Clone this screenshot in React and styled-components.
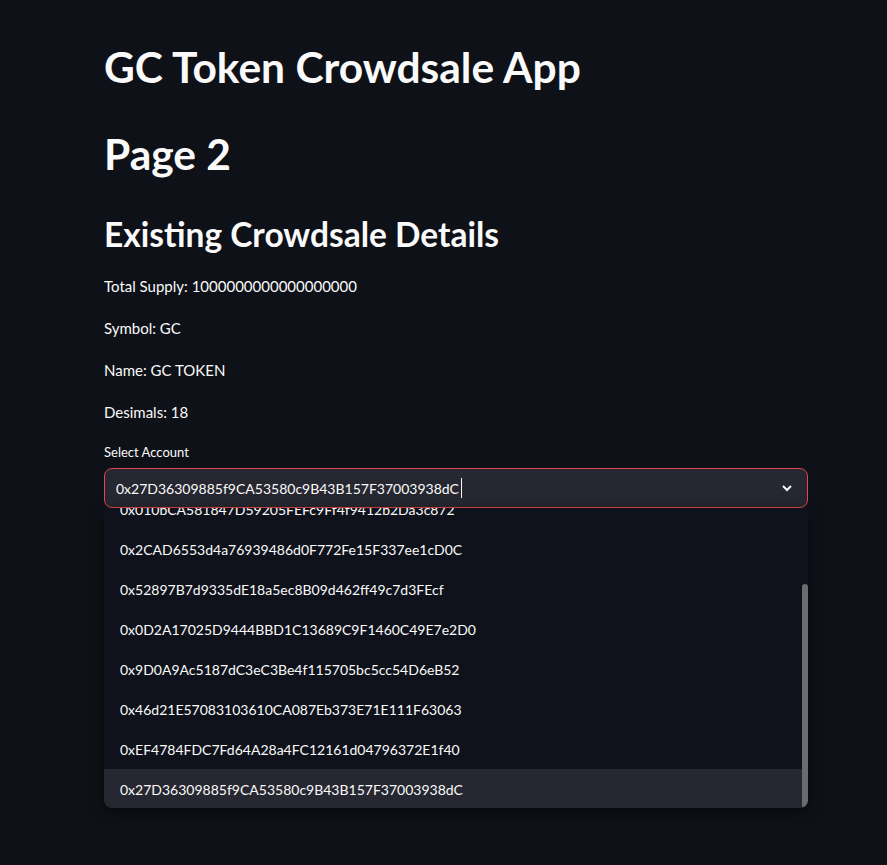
import React from 'react';
import styled, { createGlobalStyle } from 'styled-components';

const GlobalStyle = createGlobalStyle`
  html, body {
    margin: 0;
    padding: 0;
    background-color: #0e1117;
    color: #fafafa;
    font-family: Lato, "Noto Sans", sans-serif;
  }
`;

const Main = styled.main`
  width: 704px;
  padding: 41px 0 0 104px;
  min-height: 824px;
`;

const Title = styled.h1`
  margin: 0;
  font-size: 42.5px;
  line-height: 52px;
  font-weight: 700;
`;

const PageTitle = styled(Title)`
  margin-top: 35px;
`;

const Subheader = styled.h3`
  margin: 34px 0 0;
  font-size: 33.5px;
  line-height: 40px;
  font-weight: 700;
`;

const Details = styled.div`
  margin-top: 20px;
  display: flex;
  flex-direction: column;
  gap: 18px;
`;

const Line = styled.p`
  margin: 0;
  font-size: 15px;
  line-height: 24px;
`;

const Label = styled.label`
  display: block;
  margin-top: 18px;
  font-size: 13px;
  line-height: 20px;
`;

const SelectWrap = styled.div`
  position: relative;
  margin-top: 6px;
`;

const SelectBox = styled.div`
  box-sizing: border-box;
  height: 40px;
  display: flex;
  align-items: center;
  justify-content: space-between;
  padding: 0 14px 0 11px;
  background-color: #262730;
  border: 1px solid #e0474c;
  border-radius: 8px;
  font-size: 14px;
`;

const Value = styled.span`
  display: flex;
  align-items: center;
`;

const Caret = styled.span`
  width: 1px;
  height: 20px;
  margin-left: 2px;
  background-color: #fafafa;
`;

const Menu = styled.div`
  position: absolute;
  top: 100%;
  left: 0;
  right: 0;
  height: 300px;
  overflow: hidden;
  background-color: #0f121a;
  border-radius: 0 0 8px 8px;
  box-shadow: 0 4px 16px rgba(0, 0, 0, 0.45);
`;

const Options = styled.ul`
  list-style: none;
  margin: -19px 0 0;
  padding: 0;
`;

const Option = styled.li`
  height: 40px;
  display: flex;
  align-items: center;
  padding-left: 16px;
  font-size: 14px;
  background-color: ${(p) => (p.$active ? '#262730' : 'transparent')};
`;

const ScrollThumb = styled.div`
  position: absolute;
  right: 0;
  bottom: 0;
  width: 6px;
  height: 224px;
  border-radius: 4px;
  background-color: #6b6c72;
`;

const accounts = [
  '0x010bCA581847D59205FEFc9Ff4f9412b2Da3c872',
  '0x2CAD6553d4a76939486d0F772Fe15F337ee1cD0C',
  '0x52897B7d9335dE18a5ec8B09d462ff49c7d3FEcf',
  '0x0D2A17025D9444BBD1C13689C9F1460C49E7e2D0',
  '0x9D0A9Ac5187dC3eC3Be4f115705bc5cc54D6eB52',
  '0x46d21E57083103610CA087Eb373E71E111F63063',
  '0xEF4784FDC7Fd64A28a4FC12161d04796372E1f40',
  '0x27D36309885f9CA53580c9B43B157F37003938dC',
];

const selected = '0x27D36309885f9CA53580c9B43B157F37003938dC';

function App() {
  return (
    <Main>
      <GlobalStyle />
      <Title>GC Token Crowdsale App</Title>
      <PageTitle>Page 2</PageTitle>
      <Subheader>Existing Crowdsale Details</Subheader>
      <Details>
        <Line>Total Supply: 1000000000000000000</Line>
        <Line>Symbol: GC</Line>
        <Line>Name: GC TOKEN</Line>
        <Line>Desimals: 18</Line>
      </Details>
      <Label>Select Account</Label>
      <SelectWrap>
        <SelectBox>
          <Value>
            {selected}
            <Caret />
          </Value>
          <svg width="12" height="8" viewBox="0 0 12 8">
            <path d="M2 2l4 4 4-4" fill="none" stroke="#fafafa" strokeWidth="2" />
          </svg>
        </SelectBox>
        <Menu>
          <Options>
            {accounts.map((a) => (
              <Option key={a} $active={a === selected}>
                {a}
              </Option>
            ))}
          </Options>
          <ScrollThumb />
        </Menu>
      </SelectWrap>
    </Main>
  );
}

export default App;
